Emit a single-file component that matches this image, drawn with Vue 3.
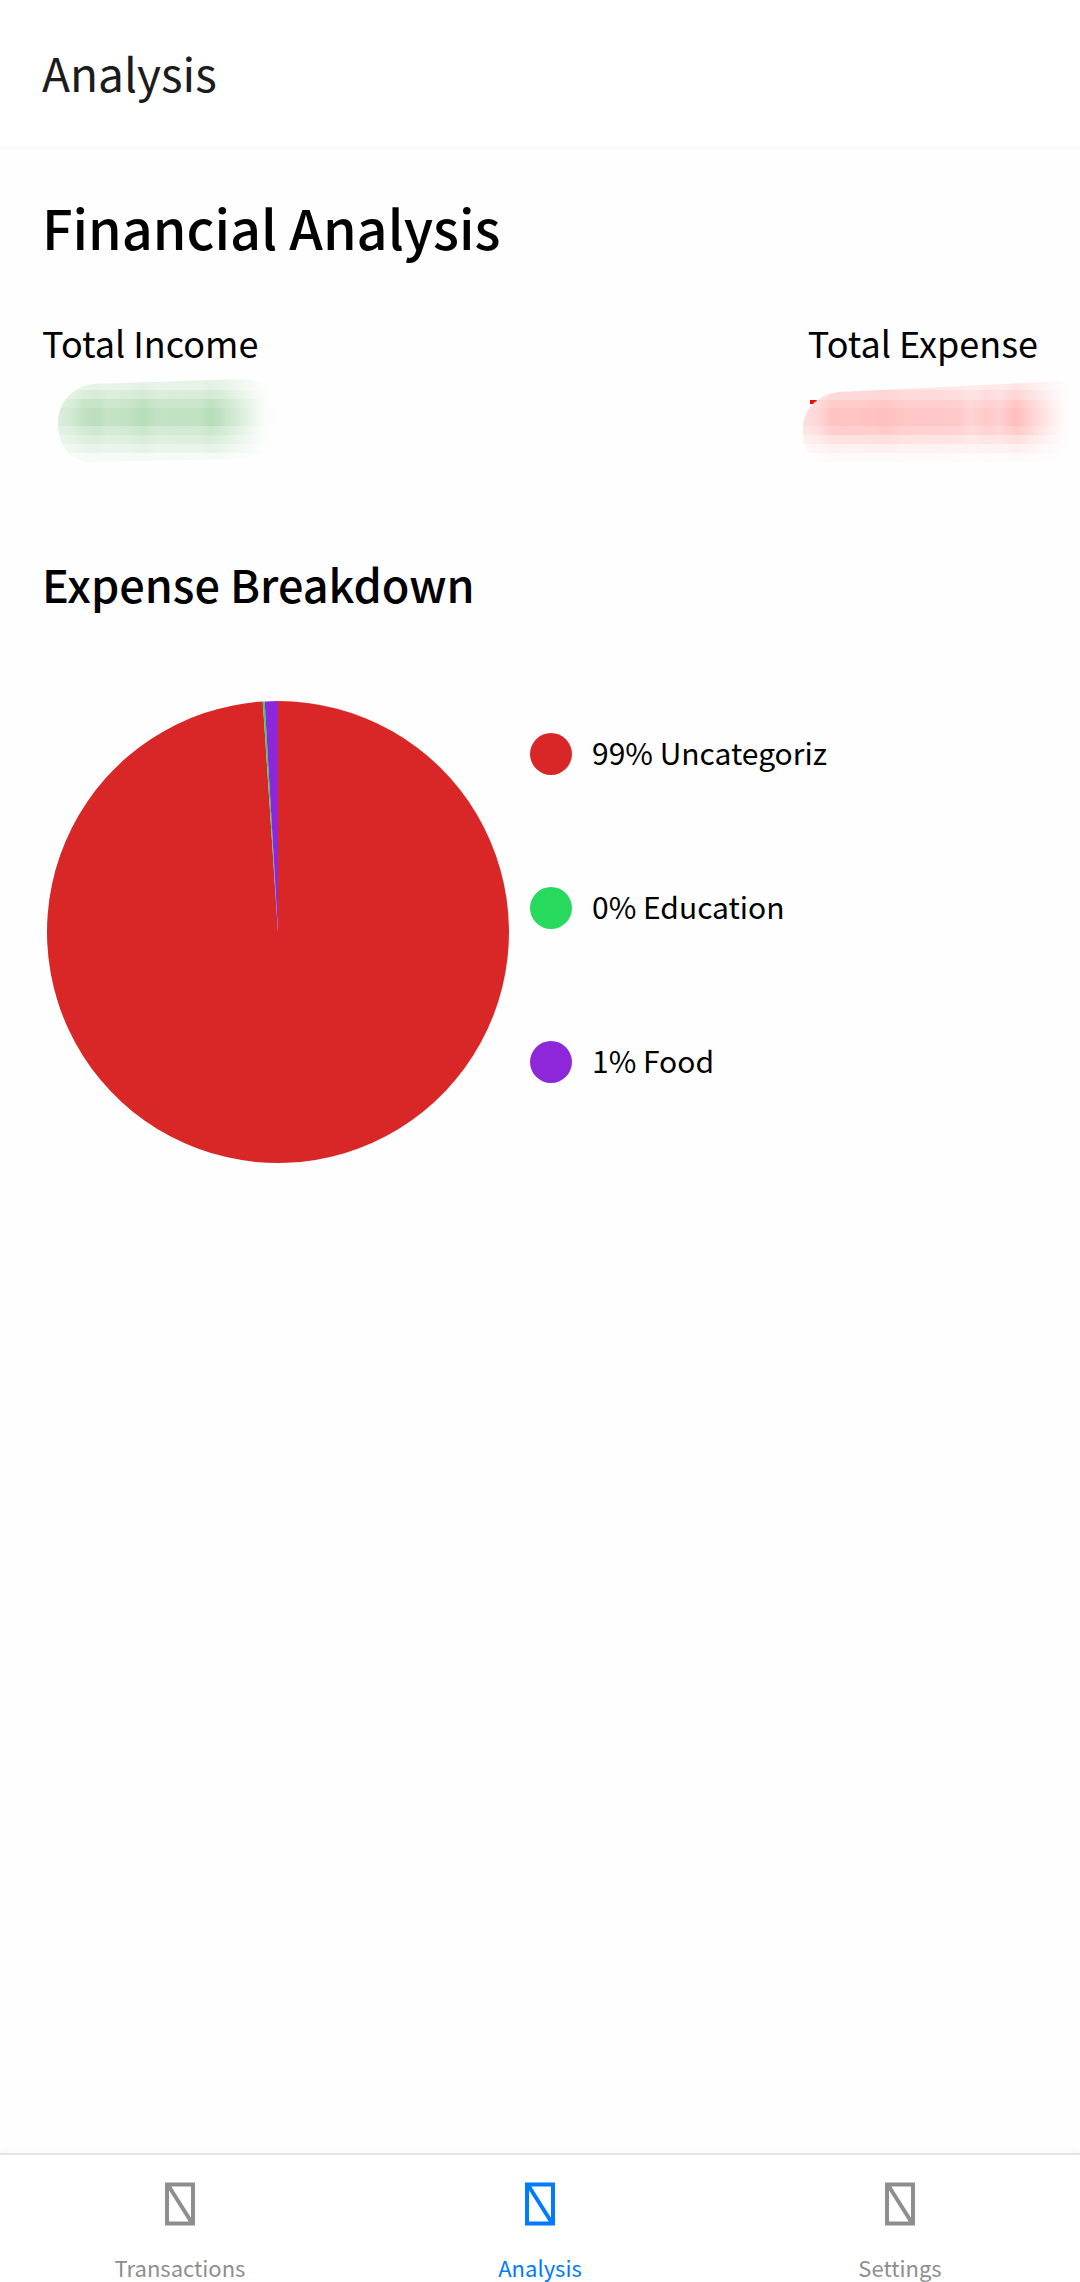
<script setup>
const slices = [
  { label: '99% Uncategoriz', color: '#d92727', share: 0.9895 },
  { label: '0% Education', color: '#27d95d', share: 0.0013 },
  { label: '1% Food', color: '#8e27d9', share: 0.0092 },
]

const center = 231
const radius = 231

function point(turn) {
  const angle = turn * 2 * Math.PI
  return `${center + radius * Math.sin(angle)} ${center - radius * Math.cos(angle)}`
}

let turn = 0
const wedges = slices.map((slice) => {
  const start = turn
  turn += slice.share
  const large = slice.share > 0.5 ? 1 : 0
  return {
    color: slice.color,
    d: `M${center} ${center}L${point(start)}A${radius} ${radius} 0 ${large} 1 ${point(turn)}Z`,
  }
})

const totals = [
  {
    id: 'income',
    label: 'Total Income',
    color: '#a9d6ab',
    outline: 'M16 44C16 22 32 7 51 5L201 0C224 0 238 20 238 42C238 64 224 78 201 80L43 83C26 80 16 64 16 46Z',
    bands: [[0, 11, 0.32], [11, 9, 0.5], [20, 9, 0.72], [29, 18, 0.84], [47, 9, 0.6], [56, 9, 0.44], [65, 9, 0.28], [74, 9, 0.1]],
    columns: [[16, 0.5], [30, 0.62], [42, 0.85], [56, 0.93], [65, 0.8], [85, 0.85], [102, 1], [116, 0.82], [136, 0.85], [156, 0.84], [168, 1.15], [178, 0.88], [190, 0.65], [204, 0.4], [214, 0.2], [224, 0.05], [238, 0]],
    left: 16,
    width: 222,
    mark: false,
  },
  {
    id: 'expense',
    label: 'Total Expense',
    color: '#ffb3b3',
    outline: 'M-5 45C-2 26 13 15 31 13L254 2L264 2V83H10C3 78 -5 66 -5 60Z',
    bands: [[0, 11, 0.36], [11, 10, 0.55], [21, 8, 0.75], [29, 18, 0.86], [47, 9, 0.7], [56, 9, 0.42], [65, 9, 0.2], [74, 9, 0.06]],
    columns: [[-5, 0.45], [10, 0.6], [24, 0.92], [50, 0.9], [78, 0.98], [96, 0.86], [130, 0.84], [152, 0.82], [163, 0.65], [178, 0.82], [192, 0.72], [208, 1.1], [218, 0.8], [232, 0.5], [248, 0.2], [256, 0.06], [264, 0]],
    left: -5,
    width: 269,
    mark: true,
  },
]

const tabs = [
  { label: 'Transactions', active: false },
  { label: 'Analysis', active: true },
  { label: 'Settings', active: false },
]
</script>

<template>
  <div class="screen">
    <header class="topbar">
      <span class="topbar-title">Analysis</span>
    </header>

    <main class="content">
      <h1 class="title">Financial Analysis</h1>

      <section class="totals">
        <div v-for="t in totals" :key="t.id" class="total">
          <span class="total-label">{{ t.label }}</span>
          <svg class="smudge" width="230" height="83" aria-hidden="true">
            <defs>
              <linearGradient :id="t.id + '-fade'" gradientUnits="userSpaceOnUse" :x1="t.left" y1="0" :x2="t.left + t.width" y2="0">
                <stop
                  v-for="c in t.columns"
                  :key="c[0]"
                  :offset="(c[0] - t.left) / t.width"
                  :stop-color="t.color"
                  :stop-opacity="Math.min(1, c[1])"
                />
              </linearGradient>
              <clipPath :id="t.id + '-shape'"><path :d="t.outline" /></clipPath>
            </defs>
            <rect v-if="t.mark" x="2" y="21" width="14" height="4" fill="#f00" />
            <g :clip-path="`url(#${t.id}-shape)`">
              <rect :x="t.left" y="0" :width="t.width" height="83" fill="#fefefe" />
              <rect
                v-for="b in t.bands"
                :key="b[0]"
                :x="t.left"
                :y="b[0]"
                :width="t.width"
                :height="b[1]"
                :fill="`url(#${t.id}-fade)`"
                :opacity="b[2]"
              />
            </g>
          </svg>
        </div>
      </section>

      <h2 class="subtitle">Expense Breakdown</h2>

      <section class="chart">
        <svg class="pie" viewBox="0 0 462 462" aria-hidden="true">
          <path v-for="w in wedges" :key="w.color" :d="w.d" :fill="w.color" />
        </svg>
        <ul class="legend">
          <li v-for="s in slices" :key="s.label" class="legend-item">
            <span class="dot" :style="{ background: s.color }"></span>
            <span class="legend-label">{{ s.label }}</span>
          </li>
        </ul>
      </section>
    </main>

    <nav class="tabbar">
      <a v-for="tab in tabs" :key="tab.label" href="#" class="tab" :class="{ active: tab.active }">
        <svg class="tab-icon" width="30" height="44" viewBox="0 0 30 44" aria-hidden="true">
          <path d="M2 2.5H28V41.5H2ZM3 3L27 41" fill="none" stroke="currentColor" stroke-width="4" />
        </svg>
        <span>{{ tab.label }}</span>
      </a>
    </nav>
  </div>
</template>

<style>
body {
  margin: 0;
  background: #fefefe;
}
</style>

<style scoped>
.screen {
  display: flex;
  flex-direction: column;
  min-height: 100vh;
  background: #fefefe;
  color: #000;
  font-family: "Noto Sans CJK SC", "Noto Sans", sans-serif;
}

.topbar {
  padding: 42px 42px 45px;
  background: #fff;
  box-shadow: 0 1px 3px rgba(0, 0, 0, 0.04);
}

.topbar-title {
  display: block;
  font-size: 46px;
  line-height: 60px;
  color: #1c1c1e;
}

.content {
  flex: 1;
  padding: 42px;
}

.title,
.subtitle {
  margin: 0;
  font-weight: 500;
}

.title {
  font-size: 54px;
  line-height: 76px;
}

.totals {
  display: flex;
  justify-content: space-between;
  margin-top: 52px;
}

.total {
  display: flex;
  flex-direction: column;
}

.total-label {
  font-size: 36px;
  line-height: 50px;
}

.smudge {
  margin-top: 12px;
  overflow: visible;
}

.subtitle {
  margin-top: 90px;
  font-size: 45px;
  line-height: 64px;
}

.chart {
  display: flex;
  gap: 21px;
  margin: 85px 0 0 5px;
}

.pie {
  width: 462px;
  height: 462px;
}

.legend {
  display: flex;
  flex-direction: column;
  gap: 112px;
  margin: 32px 0 0;
  padding: 0;
  list-style: none;
}

.legend-item {
  display: flex;
  gap: 20px;
}

.legend-label {
  font-size: 30px;
  line-height: 38px;
  white-space: nowrap;
}

.dot {
  width: 42px;
  height: 42px;
  border-radius: 50%;
}

.tabbar {
  display: flex;
  border-top: 2px solid #e5e5e5;
  background: #fff;
  box-shadow: 0 -2px 8px rgba(0, 0, 0, 0.03);
}

.tab {
  display: flex;
  flex: 1;
  flex-direction: column;
  align-items: center;
  gap: 26px;
  padding-top: 27px;
  font-size: 22px;
  line-height: 30px;
  color: #8e8e8f;
  text-decoration: none;
}

.tab.active {
  color: #007aff;
}
</style>
